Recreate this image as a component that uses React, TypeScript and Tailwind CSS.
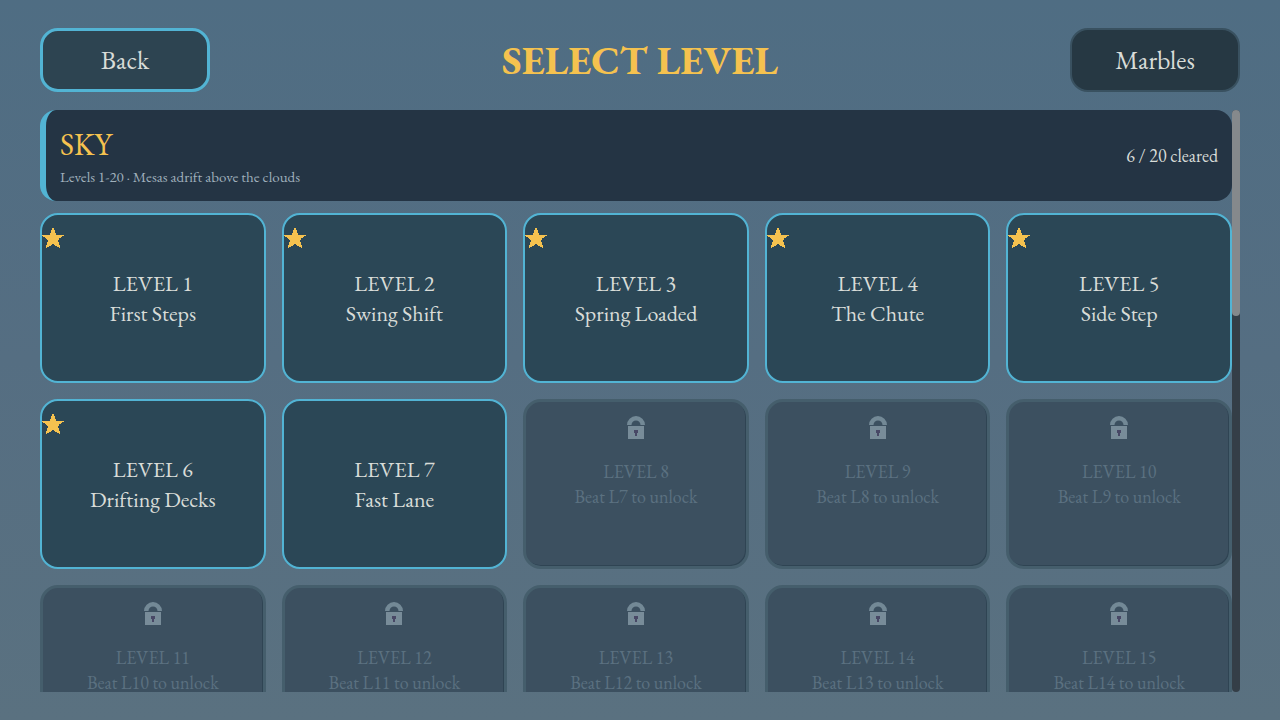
import clsx from 'clsx';

type Level = {
  id: number;
  name?: string;
  cleared?: boolean;
};

const levels: Level[] = [
  { id: 1, name: 'First Steps', cleared: true },
  { id: 2, name: 'Swing Shift', cleared: true },
  { id: 3, name: 'Spring Loaded', cleared: true },
  { id: 4, name: 'The Chute', cleared: true },
  { id: 5, name: 'Side Step', cleared: true },
  { id: 6, name: 'Drifting Decks', cleared: true },
  { id: 7, name: 'Fast Lane' },
  { id: 8 },
  { id: 9 },
  { id: 10 },
  { id: 11 },
  { id: 12 },
  { id: 13 },
  { id: 14 },
  { id: 15 },
];

function StarIcon() {
  return (
    <svg viewBox="0 0 22 22" className="absolute left-0 top-3 w-[22px] h-[22px] text-[#f5c24f]" shapeRendering="crispEdges" aria-hidden="true">
      <path fill="currentColor" d="M10 1H12V3H13V6H14V8H22V9H20V10H19V11H17V13H16V15H17V18H18V21H17V20H15V19H13V18H12V17H10V18H9V19H7V20H5V21H4V18H5V15H6V13H5V12H4V11H3V10H1V9H0V8H8V6H9V3H10Z" />
    </svg>
  );
}

function LockIcon() {
  return (
    <svg viewBox="0 0 18 24" className="w-[18px] h-6" aria-hidden="true">
      <path d="M0 9A9 9 0 0 1 18 9H13.5A4.5 4.5 0 0 0 4.5 9Z" fill="#738996" />
      <path d="M1 10H17V23H1Z" fill="#788c99" />
      <path d="M7 14H11V17H10V20H8V17H7Z" fill="#484866" />
    </svg>
  );
}

function LevelCard({ level }: { level: Level }) {
  // Locked levels have no name yet, only a hint
  if (!level.name) {
    return (
      <button
        disabled
        className="h-[170px] rounded-[18px] border-3 border-[#455e6c] bg-[#3c5060] shadow-[inset_-1px_-1px_0_#2f4453] flex flex-col items-center justify-start pt-[14px] text-lg leading-[25px] text-[#5b7180]"
      >
        <LockIcon />
        <span className="mt-[19px]">LEVEL {level.id}</span>
        <span>Beat L{level.id - 1} to unlock</span>
      </button>
    );
  }

  return (
    <button className="relative h-[170px] rounded-[18px] border-2 border-[#52b4d4] bg-[#2b4756] flex flex-col items-center justify-center pt-0.5 text-[22px] leading-[30px] text-[#d8dcd8]">
      {level.cleared && <StarIcon />}
      <span>LEVEL {level.id}</span>
      <span>{level.name}</span>
    </button>
  );
}

function NavButton({ label, active }: { label: string; active?: boolean }) {
  return (
    <button
      className={clsx(
        'w-[170px] h-16 rounded-[18px] text-[26px] text-[#d8dcd8]',
        active ? 'border-3 border-[#52b4d4] bg-[#2d4451]' : 'border-2 border-[#395160] bg-[#263843]'
      )}
    >
      {label}
    </button>
  );
}

export default function App() {
  return (
    <div className="h-screen flex flex-col gap-[18px] px-10 py-7 bg-linear-to-b from-[#4f6d83] via-[#556e82] to-[#5a7180] font-['EB_Garamond','Liberation_Serif',serif] antialiased">
      <header className="flex items-center justify-between shrink-0">
        <NavButton label="Back" active />
        <h1 className="text-[40px] leading-[60px] font-bold text-[#f5c24f]">SELECT LEVEL</h1>
        <NavButton label="Marbles" />
      </header>

      <main className="flex flex-1 min-h-0">
        <div className="flex-1 overflow-y-auto [scrollbar-width:none]">
          <section className="flex items-center justify-between h-[91px] rounded-2xl border-l-6 border-[#52b4d4] bg-[#243444] px-[14px]">
            <div className="pt-0.5">
              <h2 className="text-[30px] leading-10 text-[#f5c24f]">SKY</h2>
              <p className="text-[15px] leading-6 text-[#9fafbb]">Levels 1-20 · Mesas adrift above the clouds</p>
            </div>
            <p className="text-lg text-[#d8dcd8]">6 / 20 cleared</p>
          </section>

          <div className="mt-3 grid grid-cols-5 gap-4">
            {levels.map((level) => (
              <LevelCard key={level.id} level={level} />
            ))}
          </div>
        </div>

        {/* Scroll track */}
        <div className="w-2 rounded-full bg-[#343e47]">
          <div className="h-[35.4%] rounded-full bg-[#85898c]" />
        </div>
      </main>
    </div>
  );
}
